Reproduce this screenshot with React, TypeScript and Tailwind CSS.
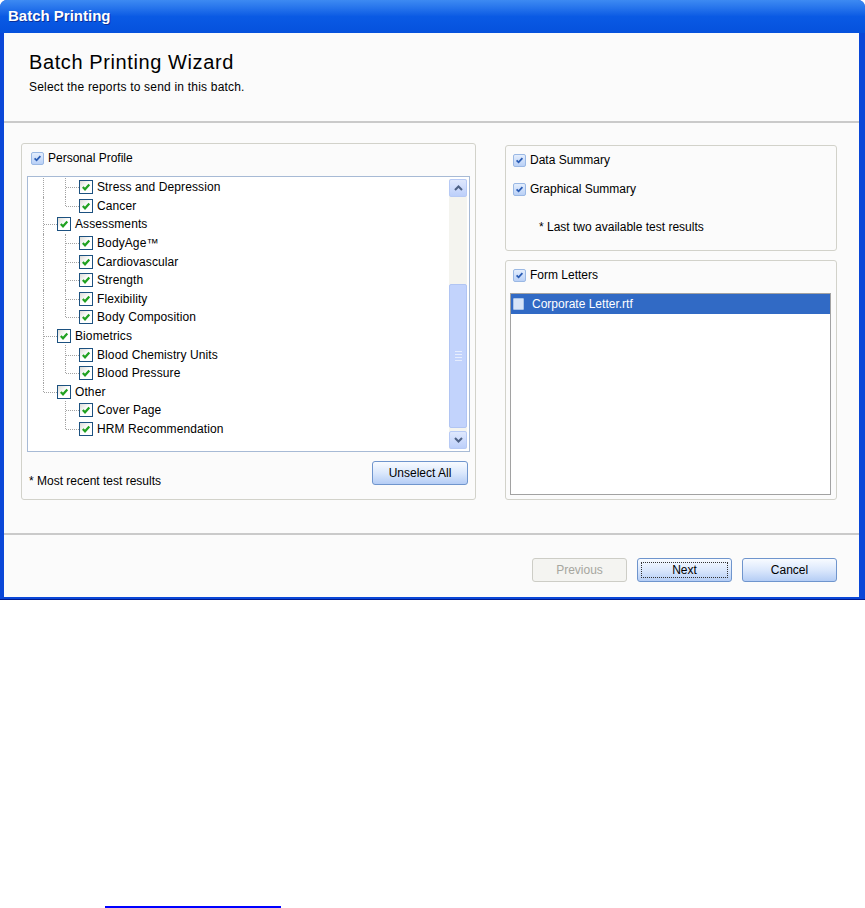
import React from "react";

type Row = { label: string; level: 1 | 2; last?: boolean };

const rows: Row[] = [
  { label: "Stress and Depression", level: 2 },
  { label: "Cancer", level: 2, last: true },
  { label: "Assessments", level: 1 },
  { label: "BodyAge™", level: 2 },
  { label: "Cardiovascular", level: 2 },
  { label: "Strength", level: 2 },
  { label: "Flexibility", level: 2 },
  { label: "Body Composition", level: 2, last: true },
  { label: "Biometrics", level: 1 },
  { label: "Blood Chemistry Units", level: 2 },
  { label: "Blood Pressure", level: 2, last: true },
  { label: "Other", level: 1 },
  { label: "Cover Page", level: 2 },
  { label: "HRM Recommendation", level: 2, last: true },
];

const otherIndex = rows.findIndex((r) => r.label === "Other");

function TreeCheck() {
  return (
    <span className="flex h-[14px] w-[14px] shrink-0 items-center justify-center border border-[#1c5180] bg-gradient-to-br from-[#dcdcd7] via-white to-white">
      <svg width="10" height="10" viewBox="0 0 10 10">
        <path d="M1.8 5 L4 7.3 L8.3 2.5" fill="none" stroke="#21a121" strokeWidth="2.2" />
      </svg>
    </span>
  );
}

function BlueCheck() {
  return (
    <span className="flex h-[13px] w-[13px] shrink-0 items-center justify-center rounded-[2px] border border-[#9ab8e4] bg-gradient-to-b from-[#e4eefd] to-[#b9d0f6]">
      <svg width="9" height="9" viewBox="0 0 9 9">
        <path d="M1.6 4.3 L3.6 6.3 L7.4 2.2" fill="none" stroke="#2a5cb4" strokeWidth="1.8" />
      </svg>
    </span>
  );
}

function XPButton({
  children,
  disabled,
  focused,
  wide,
}: {
  children: React.ReactNode;
  disabled?: boolean;
  focused?: boolean;
  wide?: boolean;
}) {
  return (
    <button
      className={`relative h-[24px] ${wide ? "w-[96px]" : "w-[95px]"} rounded-[3px] border text-[12px] ${
        disabled
          ? "border-[#cdcdc6] bg-[#f4f4f1] text-[#a6a69f]"
          : "border-[#6f95cd] bg-gradient-to-b from-[#f8fbff] via-[#dbe8fc] to-[#b5cdf5] text-black"
      }`}
    >
      {focused && (
        <span className="absolute inset-[3px] border border-dotted border-[#333]" />
      )}
      {children}
    </button>
  );
}

function TreeRow({ row, index }: { row: Row; index: number }) {
  const root = index < otherIndex ? "full" : index === otherIndex ? "half" : "none";
  return (
    <div className="relative flex h-[18.6px] items-center">
      {root === "full" && (
        <span className="absolute left-[15px] top-0 h-full border-l border-dotted border-[#a3a3a3]" />
      )}
      {root === "half" && (
        <span className="absolute left-[15px] top-0 h-1/2 border-l border-dotted border-[#a3a3a3]" />
      )}
      {row.level === 1 && (
        <span className="absolute left-[16px] top-1/2 w-[13px] border-t border-dotted border-[#a3a3a3]" />
      )}
      {row.level === 2 && (
        <span
          className={`absolute left-[37px] top-0 border-l border-dotted border-[#a3a3a3] ${
            row.last ? "h-1/2" : "h-full"
          }`}
        />
      )}
      {row.level === 2 && (
        <span className="absolute left-[38px] top-1/2 w-[13px] border-t border-dotted border-[#a3a3a3]" />
      )}
      <div className={`flex items-center gap-[4px] ${row.level === 1 ? "pl-[29px]" : "pl-[51px]"}`}>
        <TreeCheck />
        <span className="leading-[14px] tracking-[0.1px]">{row.label}</span>
      </div>
    </div>
  );
}

function ScrollBar() {
  return (
    <div className="my-[2px] mr-[2px] flex w-[18px] flex-col bg-[#f4f4ef]">
      <div className="flex h-[18px] items-center justify-center rounded-[2px] border border-[#b7caf5] bg-gradient-to-b from-[#dfe8fd] to-[#bccffa]">
        <svg width="9" height="6" viewBox="0 0 9 6">
          <path d="M1 5 L4.5 1.5 L8 5" fill="none" stroke="#4d6185" strokeWidth="2" />
        </svg>
      </div>
      <div className="flex flex-1 flex-col">
        <div className="h-[87px]" />
        <div className="flex h-[144px] flex-col items-center justify-center gap-[2px] rounded-[2px] border border-[#b1c5f3] bg-[#c2d3fc]">
          <span className="h-px w-[7px] bg-[#e6edfd]" />
          <span className="h-px w-[7px] bg-[#e6edfd]" />
          <span className="h-px w-[7px] bg-[#e6edfd]" />
          <span className="h-px w-[7px] bg-[#e6edfd]" />
        </div>
        <div className="flex-1" />
      </div>
      <div className="flex h-[18px] items-center justify-center rounded-[2px] border border-[#b7caf5] bg-gradient-to-b from-[#dfe8fd] to-[#bccffa]">
        <svg width="9" height="6" viewBox="0 0 9 6">
          <path d="M1 1 L4.5 4.5 L8 1" fill="none" stroke="#4d6185" strokeWidth="2" />
        </svg>
      </div>
    </div>
  );
}

export default function App() {
  return (
    <div className="h-[908px] w-[865px] bg-white font-['Liberation_Sans',Arial,sans-serif] text-[12px] text-black">
      <div className="flex h-[600px] w-[865px] flex-col rounded-t-[7px] bg-[#0a47d8]">
        <div className="flex h-[33px] shrink-0 items-center rounded-t-[7px] bg-gradient-to-b from-[#3d8af2] via-[#0a5ae4] to-[#0551dd] pl-[8px]">
          <span className="text-[15px] font-bold text-white [text-shadow:1px_1px_0_#0a2f9a]">
            Batch Printing
          </span>
        </div>
        <div className="ml-[4px] mr-[6px] flex flex-1 flex-col bg-[#fbfbfb]">
          <div className="h-[90px] shrink-0 border-b-2 border-[#cacaca] pl-[25px] pt-[17px]">
            <div className="text-[20px] leading-[24px] tracking-[0.6px]">Batch Printing Wizard</div>
            <div className="mt-[6px] leading-[14px] tracking-[0.2px]">
              Select the reports to send in this batch.
            </div>
          </div>

          <div className="flex h-[410px] shrink-0 gap-[29px] pl-[17px] pt-[20px]">
            <div className="flex h-[357px] w-[455px] flex-col rounded-[3px] border border-[#d2d2ca] px-[5px] pt-[6px]">
              <div className="flex h-[16px] items-center gap-[4px] pl-[4px]">
                <BlueCheck />
                <span>Personal Profile</span>
              </div>
              <div className="mt-[10px] flex h-[276px] border border-[#a7bad5] bg-white">
                <div className="flex-1 pt-[1px]">
                  {rows.map((row, i) => (
                    <TreeRow key={row.label} row={row} index={i} />
                  ))}
                </div>
                <ScrollBar />
              </div>
              <div className="mt-[9px] flex items-end justify-between pl-[2px] pr-[2px]">
                <span className="mb-[-3px] leading-[14px]">* Most recent test results</span>
                <XPButton wide>Unselect All</XPButton>
              </div>
            </div>

            <div className="mt-[2px] flex w-[332px] flex-col gap-[9px]">
              <div className="flex h-[106px] flex-col rounded-[3px] border border-[#d2d2ca] pl-[7px] pt-[6px]">
                <div className="flex h-[16px] items-center gap-[4px]">
                  <BlueCheck />
                  <span>Data Summary</span>
                </div>
                <div className="mt-[13px] flex h-[16px] items-center gap-[4px]">
                  <BlueCheck />
                  <span>Graphical Summary</span>
                </div>
                <div className="mt-[23px] pl-[26px] leading-[14px]">* Last two available test results</div>
              </div>
              <div className="flex h-[240px] flex-col rounded-[3px] border border-[#d2d2ca] pl-[4px] pr-[5px] pt-[6px]">
                <div className="flex h-[16px] items-center gap-[4px] pl-[3px]">
                  <BlueCheck />
                  <span>Form Letters</span>
                </div>
                <div className="mt-[10px] h-[202px] border border-[#a2a2a2] bg-white">
                  <div className="flex h-[20px] items-center gap-[8px] bg-[#316ac5] pl-[2px] text-white">
                    <span className="h-[12px] w-[11px] rounded-[1px] border border-[#a9c3e8] bg-[#d6e4f8]" />
                    <span>Corporate Letter.rtf</span>
                  </div>
                </div>
              </div>
            </div>
          </div>

          <div className="flex flex-1 justify-end gap-[10px] border-t-2 border-[#cacaca] pr-[22px] pt-[23px]">
            <XPButton disabled>Previous</XPButton>
            <XPButton focused>Next</XPButton>
            <XPButton>Cancel</XPButton>
          </div>
        </div>
        <div className="h-[3px] shrink-0 border-b border-[#001a8c]" />
      </div>
      <div className="ml-[105px] mt-[306px] h-[2px] w-[176px] bg-[#0000ff]" />
    </div>
  );
}
